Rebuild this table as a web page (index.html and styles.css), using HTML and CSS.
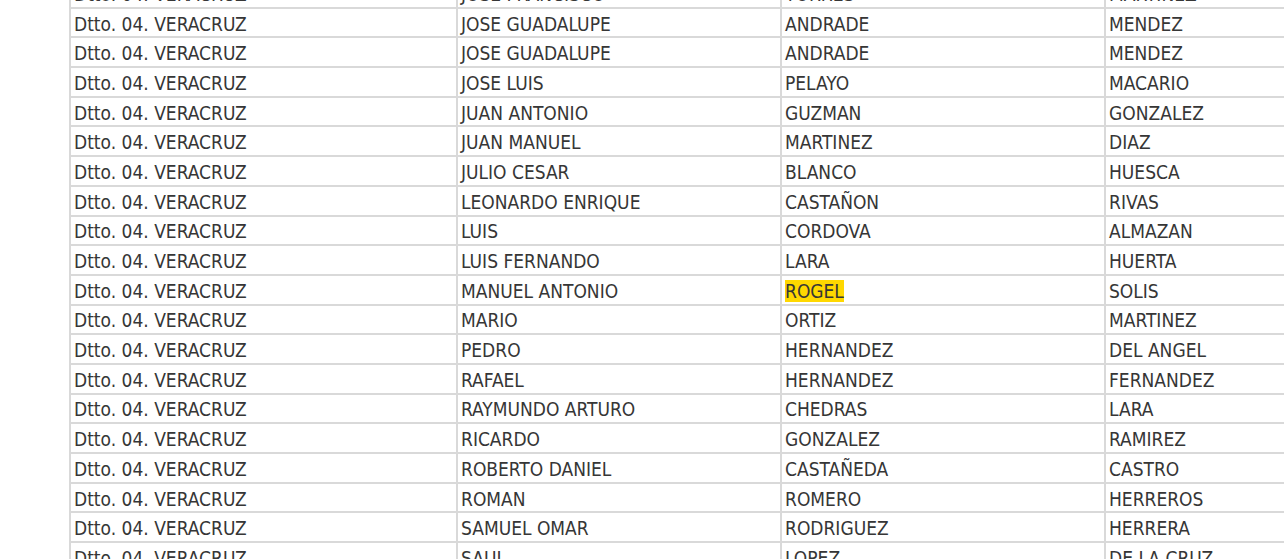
FILE: index.html
```html
<!DOCTYPE html>
<html lang="es">
<head>
<meta charset="utf-8">
<title>Listado</title>
<link rel="stylesheet" href="styles.css">
</head>
<body>
<div class="sheet">
<table class="grid">
<colgroup><col class="c1"><col class="c2"><col class="c3"><col class="c4"></colgroup>
<tbody>
<tr><td>Dtto. 04. VERACRUZ</td><td>JOSE FRANCISCO</td><td>TORRES</td><td>MARTINEZ</td></tr>
<tr><td>Dtto. 04. VERACRUZ</td><td>JOSE GUADALUPE</td><td>ANDRADE</td><td>MENDEZ</td></tr>
<tr><td>Dtto. 04. VERACRUZ</td><td>JOSE GUADALUPE</td><td>ANDRADE</td><td>MENDEZ</td></tr>
<tr><td>Dtto. 04. VERACRUZ</td><td>JOSE LUIS</td><td>PELAYO</td><td>MACARIO</td></tr>
<tr><td>Dtto. 04. VERACRUZ</td><td>JUAN ANTONIO</td><td>GUZMAN</td><td>GONZALEZ</td></tr>
<tr><td>Dtto. 04. VERACRUZ</td><td>JUAN MANUEL</td><td>MARTINEZ</td><td>DIAZ</td></tr>
<tr><td>Dtto. 04. VERACRUZ</td><td>JULIO CESAR</td><td>BLANCO</td><td>HUESCA</td></tr>
<tr><td>Dtto. 04. VERACRUZ</td><td>LEONARDO ENRIQUE</td><td>CASTAÑON</td><td>RIVAS</td></tr>
<tr><td>Dtto. 04. VERACRUZ</td><td>LUIS</td><td>CORDOVA</td><td>ALMAZAN</td></tr>
<tr><td>Dtto. 04. VERACRUZ</td><td>LUIS FERNANDO</td><td>LARA</td><td>HUERTA</td></tr>
<tr><td>Dtto. 04. VERACRUZ</td><td>MANUEL ANTONIO</td><td><mark class="hit">ROGEL</mark></td><td>SOLIS</td></tr>
<tr><td>Dtto. 04. VERACRUZ</td><td>MARIO</td><td>ORTIZ</td><td>MARTINEZ</td></tr>
<tr><td>Dtto. 04. VERACRUZ</td><td>PEDRO</td><td>HERNANDEZ</td><td>DEL ANGEL</td></tr>
<tr><td>Dtto. 04. VERACRUZ</td><td>RAFAEL</td><td>HERNANDEZ</td><td>FERNANDEZ</td></tr>
<tr><td>Dtto. 04. VERACRUZ</td><td>RAYMUNDO ARTURO</td><td>CHEDRAS</td><td>LARA</td></tr>
<tr><td>Dtto. 04. VERACRUZ</td><td>RICARDO</td><td>GONZALEZ</td><td>RAMIREZ</td></tr>
<tr><td>Dtto. 04. VERACRUZ</td><td>ROBERTO DANIEL</td><td>CASTAÑEDA</td><td>CASTRO</td></tr>
<tr><td>Dtto. 04. VERACRUZ</td><td>ROMAN</td><td>ROMERO</td><td>HERREROS</td></tr>
<tr><td>Dtto. 04. VERACRUZ</td><td>SAMUEL OMAR</td><td>RODRIGUEZ</td><td>HERRERA</td></tr>
<tr><td>Dtto. 04. VERACRUZ</td><td>SAUL</td><td>LOPEZ</td><td>DE LA CRUZ</td></tr>
</tbody>
</table>
</div>
</body>
</html>
```
FILE: styles.css
```css
html, body {
  margin: 0;
  padding: 0;
  background: #ffffff;
  overflow: hidden;
  height: 559px;
}
.sheet {
  padding-left: 69px;
  margin-top: -21px;
  width: 1500px;
}
.grid {
  border-collapse: separate;
  border-spacing: 0;
  table-layout: fixed;
  width: 1361px;
  border-left: 2px solid #d9d9d9;
  font-family: "DejaVu Sans Condensed", "DejaVu Sans", sans-serif;
  font-size: 19px;
  color: #363636;
}
.c1 { width: 387px; }
.c2 { width: 324px; }
.c3 { width: 324px; }
.c4 { width: 326px; }
.grid td {
  box-sizing: border-box;
  height: 29.7px;
  padding: 2px 3px 0 3px;
  border-right: 2px solid #d9d9d9;
  border-bottom: 2px solid #d9d9d9;
  white-space: nowrap;
  overflow: hidden;
  line-height: 22px;
  vertical-align: middle;
}
.hit {
  background: #ffd800;
  color: #363636;
  padding: 0;
}
```
